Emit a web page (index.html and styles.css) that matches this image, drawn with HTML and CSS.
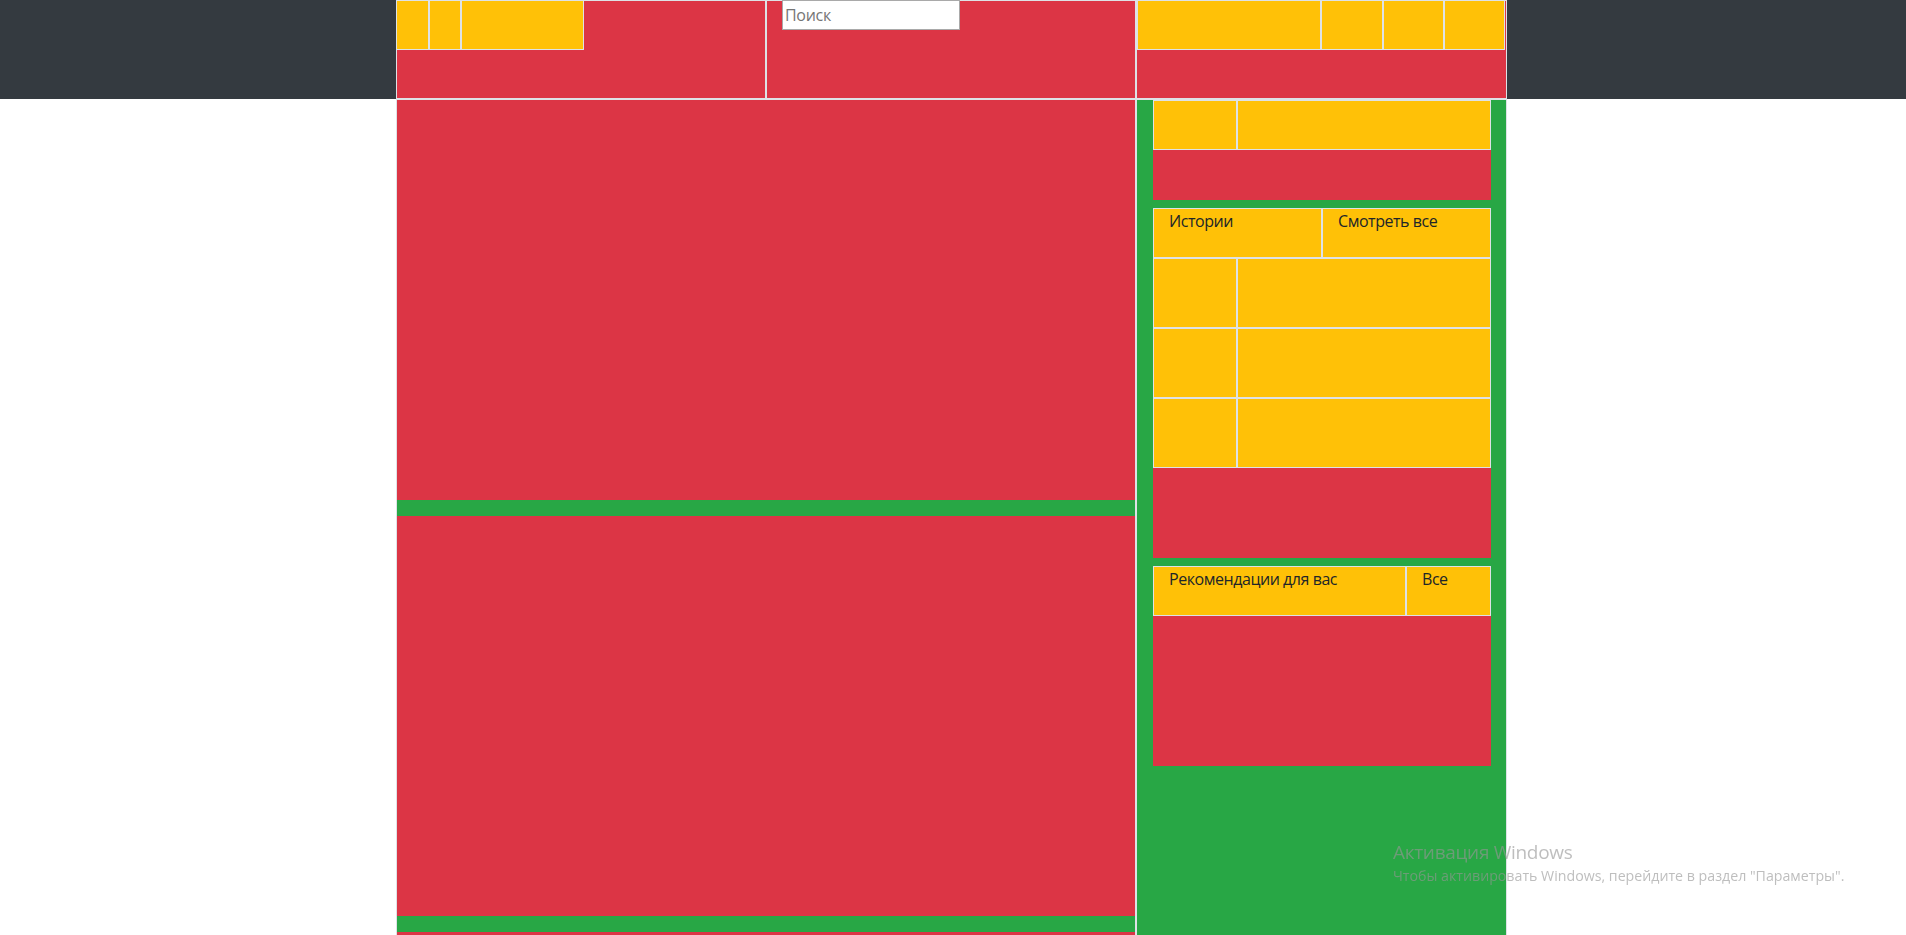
FILE: index.html
```html
<!DOCTYPE html>
<html lang="ru">
<head>
<meta charset="utf-8">
<title>Layout</title>
<link rel="stylesheet" href="styles.css">
</head>
<body>
<header class="topbar">
  <div class="container">
    <div class="hcol">
      <div class="hcells hcells-left">
        <div class="cell c33"></div>
        <div class="cell c32"></div>
        <div class="cell c123"></div>
      </div>
    </div>
    <div class="hcol hcol-search">
      <input class="search" type="text" placeholder="Поиск">
    </div>
    <div class="hcol hcol-wide">
      <div class="hcells">
        <div class="cell c184"></div>
        <div class="cell c62"></div>
        <div class="cell c61"></div>
        <div class="cell c61"></div>
      </div>
    </div>
  </div>
</header>
<main class="container">
  <section class="feed">
    <div class="post"></div>
    <div class="post"></div>
    <div class="post"></div>
  </section>
  <aside class="sidebar">
    <div class="box box-100">
      <div class="srow">
        <div class="cell q1"></div>
        <div class="cell q3"></div>
      </div>
    </div>
    <div class="box box-350">
      <div class="srow">
        <div class="cell half">Истории</div>
        <div class="cell half">Смотреть все</div>
      </div>
      <div class="srow tall">
        <div class="cell q1"></div>
        <div class="cell q3"></div>
      </div>
      <div class="srow tall">
        <div class="cell q1"></div>
        <div class="cell q3"></div>
      </div>
      <div class="srow tall">
        <div class="cell q1"></div>
        <div class="cell q3"></div>
      </div>
    </div>
    <div class="box box-200">
      <div class="srow">
        <div class="cell w253">Рекомендации для вас</div>
        <div class="cell w85">Все</div>
      </div>
    </div>
  </aside>
</main>
<div class="activation">
  <div class="act-title">Активация Windows</div>
  <div class="act-text">Чтобы активировать Windows, перейдите в раздел "Параметры".</div>
</div>
</body>
</html>
```
FILE: styles.css
```css
* { box-sizing: border-box; }
html { overflow: hidden; }
body {
  margin: 0;
  font-family: "Open Sans", "Noto Sans", sans-serif;
  font-size: 16px;
  line-height: 1.5;
  color: #212529;
  background: #fff;
}
.container {
  display: flex;
  width: 1111px;
  margin-left: calc(50% - 557px);
}
.topbar { background: #343a40; }

.hcol {
  width: 370px;
  height: 99px;
  border: 1px solid #dee2e6;
  background: #dc3545;
}
.hcol-wide { width: 371px; }
.hcol-search { padding: 0 15px; }
.hcells { display: flex; margin-top: -1px; }
.hcells-left { margin-left: -1px; }

.cell {
  border: 1px solid #dee2e6;
  background: #ffc107;
  height: 50px;
  padding: 0 15px;
  letter-spacing: -0.45px;
  white-space: nowrap;
}
.c33 { width: 33px; }
.c32 { width: 32px; }
.c123 { width: 123px; }
.c184 { width: 184px; }
.c62 { width: 62px; }
.c61 { width: 61px; }

.search {
  display: block;
  width: 178px;
  height: 30px;
  margin-top: -1px;
  border: 1px solid #a9a9a9;
  padding: 0 2px;
  font-family: "Open Sans", "Noto Sans", sans-serif;
  font-size: 16px;
  letter-spacing: -0.3px;
  color: #212529;
  background: #fff;
}
.search::placeholder { color: #757575; }

.feed {
  width: 740px;
  border: 1px solid #dee2e6;
  background: #28a745;
}
.post {
  height: 400px;
  background: #dc3545;
  margin-bottom: 16px;
}

.sidebar {
  width: 371px;
  border: 1px solid #dee2e6;
  background: #28a745;
  padding: 0 15px 0 16px;
}
.box {
  background: #dc3545;
  margin-bottom: 8px;
}
.box-100 { height: 100px; }
.box-350 { height: 350px; }
.box-200 { height: 200px; }
.srow { display: flex; }
.srow.tall .cell { height: 70px; }
.q1 { width: 84px; }
.q3 { width: 254px; }
.half { width: 169px; }
.w253 { width: 253px; }
.w85 { width: 85px; }

.activation {
  position: fixed;
  left: 1393px;
  top: 839px;
  color: rgba(150, 150, 150, 0.62);
  pointer-events: none;
  font-family: "Open Sans", "Noto Sans", sans-serif;
  white-space: nowrap;
}
.act-title { font-size: 19px; line-height: 27px; letter-spacing: -0.3px; }
.act-text { font-size: 14.2px; line-height: 20px; }
```
